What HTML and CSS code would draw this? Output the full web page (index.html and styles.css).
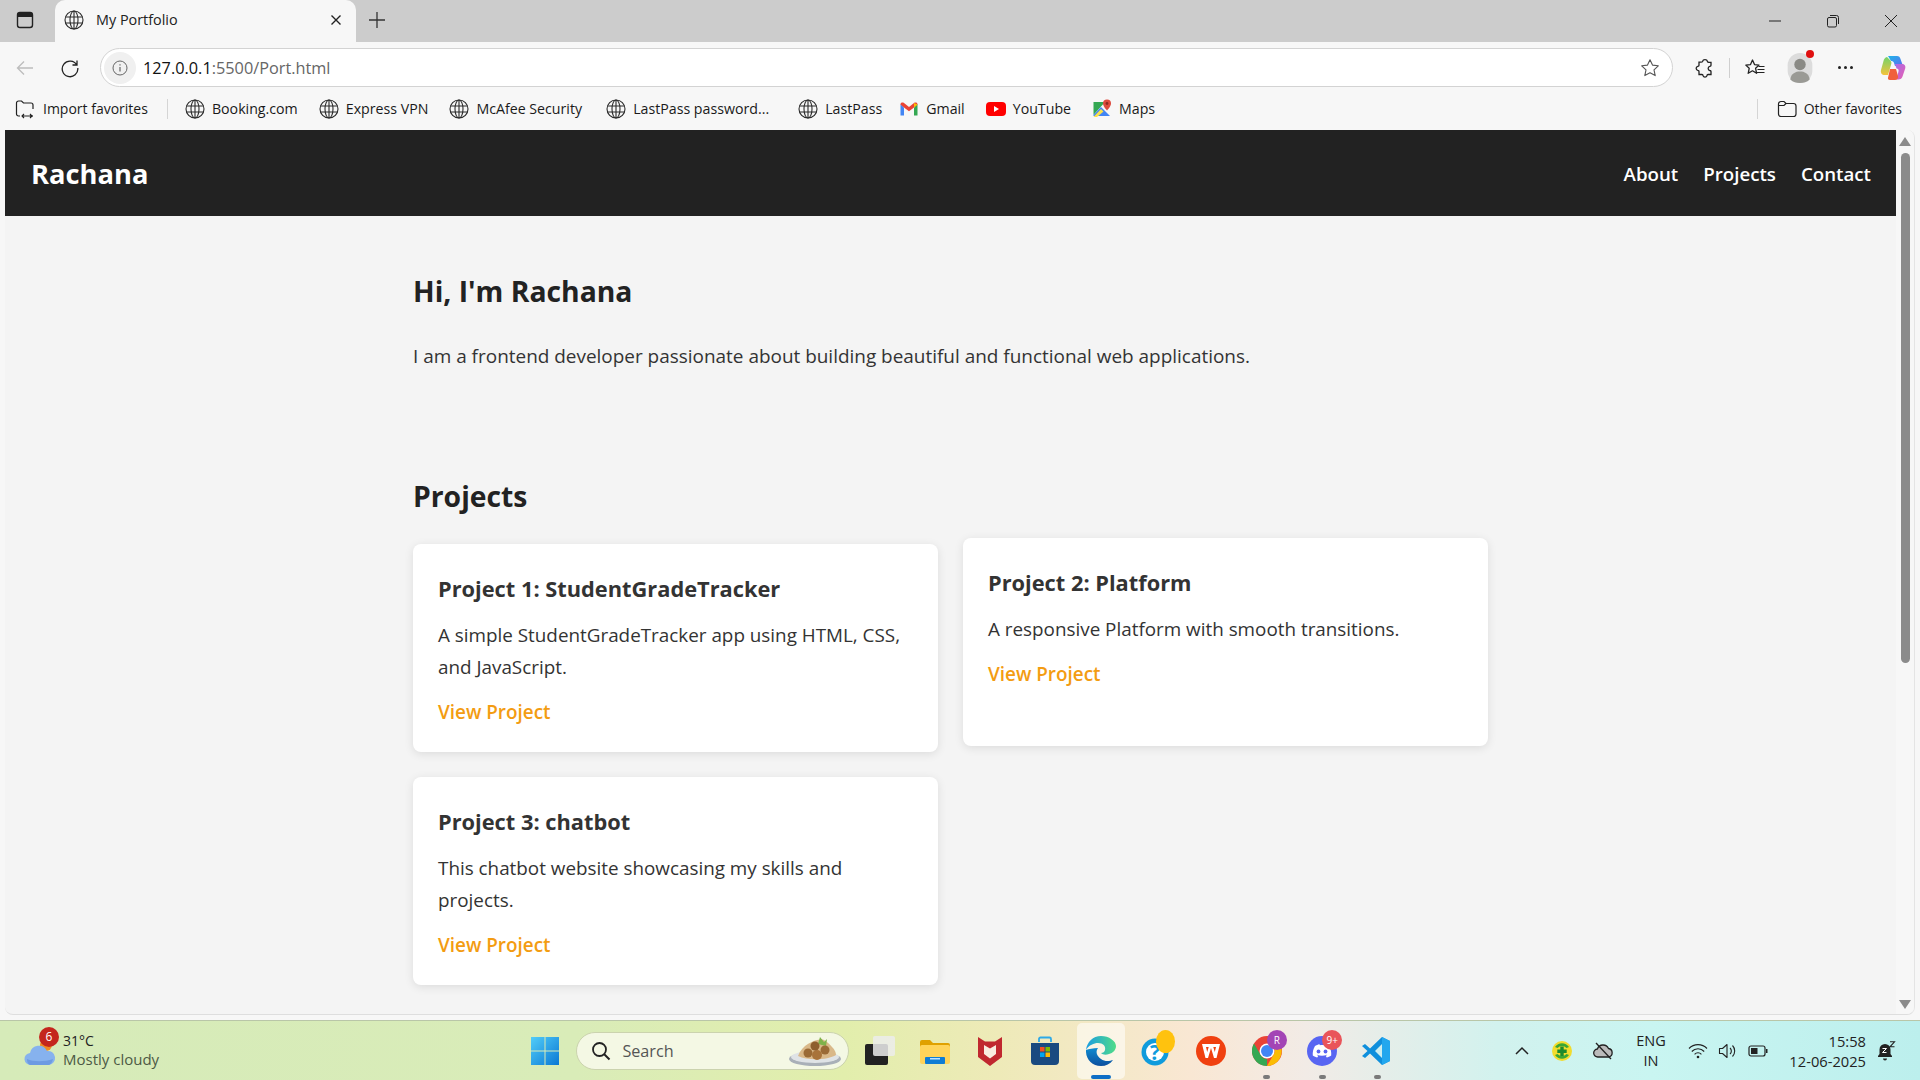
FILE: index.html
```html
<!DOCTYPE html>
<html lang="en">
  <head>
    <meta charset="utf-8" />
    <meta name="viewport" content="width=device-width, initial-scale=1" />
    <title>My Portfolio</title>
    <link rel="stylesheet" href="styles.css">
  </head>
  <body>
    <svg class="defs" width="0" height="0">
      <symbol id="globe" viewBox="0 0 20 20">
        <g fill="none" stroke="#2b2b2b" stroke-width="1.1">
          <circle cx="10" cy="10" r="9" />
          <ellipse cx="10" cy="10" rx="4" ry="9" />
          <path d="M1.6 7h16.8M1.6 13h16.8M10 1v18" />
        </g>
      </symbol>
    </svg>

    <div class="window">
      <!-- tab strip -->
      <div class="tabstrip">
        <div class="tabstrip-side">
          <svg class="ic20" viewBox="0 0 20 20"><rect x="2.5" y="2.5" width="15" height="15" rx="2.5" fill="none" stroke="#222" stroke-width="1.4" /><path d="M2.5 7V5a2.500 2.500 0 0 1 2.500-2.500h10A2.500 2.500 0 0 1 17.500 5v2z" fill="#222" /></svg>
        </div>
        <div class="tab">
          <svg class="ic20"><use href="#globe" /></svg>
          <span class="tab-title">My Portfolio</span>
          <svg class="tab-close" viewBox="0 0 12 12"><path d="M1.500 1.500l9 9M10.500 1.500l-9 9" stroke="#222" stroke-width="1.400" /></svg>
        </div>
        <svg class="tab-new" viewBox="0 0 18 18"><path d="M9 1v16M1 9h16" stroke="#333" stroke-width="1.300" /></svg>
        <div class="winctl">
          <svg class="winbtn" viewBox="0 0 14 14"><path d="M1 7h12" stroke="#222" stroke-width="1" /></svg>
          <svg class="winbtn" viewBox="0 0 14 14"><rect x="1.500" y="3.500" width="9" height="9.500" rx="1.500" fill="none" stroke="#222" /><path d="M4 1.500h6.500A2 2 0 0 1 12.500 3.500V10" fill="none" stroke="#222" /></svg>
          <svg class="winbtn" viewBox="0 0 14 14"><path d="M1 1l12 12M13 1L1 13" stroke="#222" stroke-width="1" /></svg>
        </div>
      </div>

      <!-- address bar -->
      <div class="toolbar">
        <svg class="tool-back" viewBox="0 0 20 20"><path d="M18 10H2.500M9 3.500L2.500 10 9 16.500" fill="none" stroke="#bdbdbd" stroke-width="1.300" /></svg>
        <svg class="tool-reload" viewBox="0 0 20 20"><path d="M16.800 7A7.800 7.800 0 1 0 17.800 10M17 2.500V7h-4.500" fill="none" stroke="#222" stroke-width="1.300" /></svg>
        <div class="address">
          <span class="addr-info"><svg class="ic16" viewBox="0 0 16 16"><circle cx="8" cy="8" r="7" fill="none" stroke="#666" /><path d="M8 7v4.500M8 4.300v1.200" stroke="#666" stroke-width="1.200" /></svg></span>
          <span class="addr-host">127.0.0.1</span><span class="addr-path">:5500/Port.html</span>
          <svg class="addr-star" viewBox="0 0 20 20"><path d="M10 1.700l2.500 5.400 5.800.7-4.300 4 1.200 5.800-5.200-2.900-5.200 2.900 1.200-5.800-4.300-4 5.800-.7z" fill="none" stroke="#555" stroke-width="1.100" stroke-linejoin="round" /></svg>
        </div>
        <div class="tools">
          <svg class="tool t-ext" viewBox="0 0 20 20"><path d="M7.500 3.500a2.600 2.600 0 0 1 5 0c.2.700.8.900 1.500.8h2v3c0 .700-.6 1-1.200 1.100a2.100 2.100 0 0 0 0 4.100c.6.100 1.200.4 1.200 1.100V16.500h-3c-.7 0-1 .6-1.100 1.200a2 2 0 0 1-3.800 0c-.1-.6-.4-1.200-1.100-1.200h-3v-3c0-.7-.6-1-1.200-1.100a2.100 2.100 0 0 1 0-4.100c.6-.1 1.200-.4 1.200-1.100v-3h2c.7 0 1.300-.1 1.500-.7z" fill="none" stroke="#222" stroke-width="1.300" /></svg>
          <span class="tool-sep"></span>
          <svg class="tool t-fav" viewBox="0 0 22 20"><path d="M8.500 2l2 4.600 4.500.5-3.400 3.200 1 5-4.100-2.500-4.300 2.500 1-5L1.800 7.100l4.700-.5z" fill="none" stroke="#222" stroke-width="1.300" stroke-linejoin="round" /><path d="M14.500 8.500h6M13.500 11.500h7M13 14.500h7.500" stroke="#222" stroke-width="1.100" /></svg>
          <span class="avatar">
            <svg viewBox="0 0 28 34" class="avatar-img"><rect width="28" height="34" rx="14" fill="#dcdcdc" /><circle cx="14" cy="13" r="6.500" fill="#8a8a85" /><path d="M3 30c1-7 6-9 11-9s10 2 11 9c-3 3-7 4-11 4S6 33 3 30z" fill="#9a9a95" /></svg>
            <span class="avatar-dot"></span>
          </span>
          <span class="tool-more">
            <i></i><i></i><i></i>
          </span>
          <svg class="t-copilot" viewBox="0 0 28 28">
            <defs>
              <linearGradient id="cpA" x1="0" y1="0" x2="1" y2="1"><stop offset="0" stop-color="#1fb6e8" /><stop offset="1" stop-color="#5e6cf0" /></linearGradient>
              <linearGradient id="cpB" x1="0" y1="0" x2="0" y2="1"><stop offset="0" stop-color="#72d36a" /><stop offset="1" stop-color="#f5c33b" /></linearGradient>
              <linearGradient id="cpC" x1="0" y1="0" x2="1" y2="1"><stop offset="0" stop-color="#a66ce8" /><stop offset="1" stop-color="#ea5fb0" /></linearGradient>
            </defs>
            <path d="M9 2h9c2 0 3 1 3.500 3L24 12h-8l-1-3c-.5-1.500-1.500-2-3-2z" fill="url(#cpA)" />
            <path d="M8 3c-2 .5-3 2-3.500 4L2 16c-.7 3 1 5 3.500 5H9l3-10c.5-1.500 1-3-1-5z" fill="url(#cpB)" />
            <path d="M16 10h7c2.500 0 4 2 3.200 4.500l-2.700 8c-.6 2-2 3-4 3h-2l2-8c.5-2-.5-3-2-3z" fill="url(#cpC)" />
            <path d="M11 15h6l2 7c.5 2-.7 4-3 4h-5c-2 0-2.500-1.500-1.800-3z" fill="#f0603c" />
          </svg>
        </div>
      </div>

      <!-- favorites bar -->
      <div class="favbar">
        <a class="fav fav-import">
          <svg class="ic20" viewBox="0 0 20 20"><path d="M5 17H3.500A2 2 0 0 1 1.500 15V4A2 2 0 0 1 3.500 2h3l2 2h7.500a2 2 0 0 1 2 2v4M15 17h3" fill="none" stroke="#222" stroke-width="1.200" /><path d="M7 17h10M9 15l-2 2 2 2M15 15l2 2-2 2" fill="none" stroke="#222" stroke-width="1.100" /></svg>
          Import favorites
        </a>
        <span class="fav-sep"></span>
        <a class="fav"><svg class="ic20"><use href="#globe" /></svg>Booking.com</a>
        <a class="fav"><svg class="ic20"><use href="#globe" /></svg>Express VPN</a>
        <a class="fav fav-wide"><svg class="ic20"><use href="#globe" /></svg>McAfee Security</a>
        <a class="fav fav-long"><svg class="ic20"><use href="#globe" /></svg>LastPass password...</a>
        <a class="fav fav-short"><svg class="ic20"><use href="#globe" /></svg>LastPass</a>
        <a class="fav">
          <svg class="ic20" viewBox="0 0 20 20"><path d="M1.500 5v11.500h3.500V8.500z" fill="#4285f4" /><path d="M18.500 5v11.500H15V8.500z" fill="#34a853" /><path d="M1.500 5.500C1.500 3.500 3.500 3 5 4l5 4 5-4c1.500-1 3.500-.5 3.500 1.500L15 8.500l-5 3.800-5-3.800z" fill="#ea4335" /><path d="M15 4l3.500 1.500L15 8.500z" fill="#fbbc04" /></svg>
          Gmail
        </a>
        <a class="fav">
          <svg class="ic20" viewBox="0 0 20 20"><rect y="3" width="20" height="14" rx="4" fill="#f00" /><path d="M8 7l5 3-5 3z" fill="#fff" /></svg>
          YouTube
        </a>
        <a class="fav">
          <svg class="ic20" viewBox="0 0 20 20"><path d="M1.500 3h11.500L1.500 16z" fill="#34a853" /><path d="M1.500 16L9 8l9 9H1.500z" fill="#4285f4" /><path d="M1.500 18l7.500-8 2.500 2.500L5 18z" fill="#fbe14b" /><path d="M15 0.500a4 4 0 0 1 4 4c0 3-4 7-4 7s-4-4-4-7a4 4 0 0 1 4-4z" fill="#dd4b3e" /><circle cx="15" cy="4.500" r="1.400" fill="#8f2a20" /></svg>
          Maps
        </a>
        <span class="fav-sep fav-sep-end"></span>
        <a class="fav fav-other">
          <svg class="ic20" viewBox="0 0 20 20"><path d="M1.500 5A2.500 2.500 0 0 1 4 2.500h3l2 2h7.500A2.500 2.500 0 0 1 19 7v8a2.500 2.500 0 0 1-2.500 2.500h-12.500A2.500 2.500 0 0 1 1.500 15zM1.500 6.500H7l2-2" fill="none" stroke="#222" stroke-width="1.200" /></svg>
          Other favorites
        </a>
      </div>

      <!-- the portfolio page itself -->
      <div class="viewport">
        <div class="page">
          <header class="site-header">
            <div class="logo">Rachana</div>
            <nav class="site-nav">
              <a href="#about">About</a>
              <a href="#projects">Projects</a>
              <a href="#contact">Contact</a>
            </nav>
          </header>
          <main class="content">
            <section class="intro" id="about">
              <h2>Hi, I'm Rachana</h2>
              <p>I am a frontend developer passionate about building beautiful and functional web applications.</p>
            </section>
            <section id="projects">
              <h2>Projects</h2>
              <div class="project-grid">
                <div class="card">
                  <h3>Project 1: StudentGradeTracker</h3>
                  <p>A simple StudentGradeTracker app using HTML, CSS, and JavaScript.</p>
                  <a href="#">View Project</a>
                </div>
                <div class="card card-hover">
                  <h3>Project 2: Platform</h3>
                  <p>A responsive Platform with smooth transitions.</p>
                  <a href="#">View Project</a>
                </div>
                <div class="card">
                  <h3>Project 3: chatbot</h3>
                  <p>This chatbot website showcasing my skills and projects.</p>
                  <a href="#">View Project</a>
                </div>
              </div>
            </section>
          </main>
        </div>
        <div class="scrollbar">
          <span class="arrow-up"></span>
          <span class="thumb"></span>
          <span class="arrow-down"></span>
        </div>
      </div>

      <!-- windows taskbar -->
      <footer class="taskbar">
        <div class="weather">
          <span class="weather-icon">
            <svg viewBox="0 0 32 30"><circle cx="22" cy="8" r="6" fill="#f08a24" /><path d="M7 28a6 6 0 0 1-1-12 9 9 0 0 1 17-2 7 7 0 0 1 2 14z" fill="#86b2ee" /><path d="M3 22c6 3 18 3 26 0-1 4-3 6-5 6H7c-2 0-4-2-4-6z" fill="#6d9be2" /></svg>
            <span class="weather-badge">6</span>
          </span>
          <div class="weather-text">
            <div class="weather-temp">31°C</div>
            <div class="weather-desc">Mostly cloudy</div>
          </div>
        </div>

        <div class="task-item">
          <svg class="ic30" viewBox="0 0 30 30"><defs><linearGradient id="winG" x1="0" y1="0" x2="1" y2="1"><stop offset="0" stop-color="#52cdf8" /><stop offset="1" stop-color="#0a78d4" /></linearGradient></defs><path d="M1 1h13.500v13.500H1zM15.500 1H29v13.500H15.500zM1 15.500h13.500V29H1zM15.500 15.500H29V29H15.500z" fill="url(#winG)" /></svg>
        </div>

        <div class="search">
          <svg class="search-icon" viewBox="0 0 20 20"><circle cx="8.500" cy="8.500" r="6.500" fill="none" stroke="#222" stroke-width="1.800" /><path d="M13 13l5.500 5.500" stroke="#222" stroke-width="2" /></svg>
          <span class="search-label">Search</span>
          <svg class="search-pic" viewBox="0 0 54 30">
            <ellipse cx="27" cy="23" rx="26" ry="7" fill="#a9b0b8" /><ellipse cx="27" cy="21" rx="24" ry="6" fill="#dfe3e6" />
            <path d="M10 20C14 8 30 2 36 4c6 4 12 10 12 15-8 5-28 6-38 1z" fill="#d9b888" />
            <path d="M32 1l4 5 3-3-1 7-8-2z" fill="#7fb24a" />
            <circle cx="20" cy="17" r="4.500" fill="#9a6a35" /><circle cx="29" cy="19" r="5" fill="#a8733a" /><circle cx="27" cy="10" r="4.500" fill="#8e5f2e" /><circle cx="37" cy="14" r="4.500" fill="#9a6a35" />
          </svg>
        </div>

        <div class="task-icons">
          <div class="task-item">
            <svg class="ic30 icon-right" viewBox="0 0 30 30"><rect x="0" y="8" width="23" height="21" rx="2" fill="#222" /><rect x="8" y="0" width="22" height="20" rx="2" fill="#ececec" opacity=".85" /></svg>
          </div>
          <div class="task-item">
            <svg class="ic30 icon-right" viewBox="0 0 30 30"><path d="M0 6a2 2 0 0 1 2-2h8l3 3h15a2 2 0 0 1 2 2v2H0z" fill="#e0a100" /><rect y="9" width="30" height="19" rx="2" fill="#ffd45a" /><rect x="5" y="21" width="20" height="7" rx="1" fill="#0f7dd4" /><rect x="10" y="22" width="10" height="1.500" fill="#bfe3ff" /></svg>
          </div>
          <div class="task-item">
            <svg class="ic30" viewBox="0 0 30 30"><path d="M3 1l7 4.500h10L27 1v20L15 30 3 21z" fill="#c0282f" /><path d="M9 9l6 3.500L21 9v9l-6 4.500L9 18z" fill="#f8ece0" /></svg>
          </div>
          <div class="task-item">
            <svg class="ic30" viewBox="0 0 30 30"><path d="M9 6V3a1.500 1.500 0 0 1 1.500-1.500h9A1.500 1.500 0 0 1 21 3v3" fill="none" stroke="#2da9e8" stroke-width="1.800" /><path d="M1 7h28v18a4 4 0 0 1-4 4H5a4 4 0 0 1-4-4z" fill="#1a4a80" /><rect x="10" y="11" width="4.500" height="4.500" fill="#f25022" /><rect x="15.500" y="11" width="4.500" height="4.500" fill="#7fba00" /><rect x="10" y="16.500" width="4.500" height="4.500" fill="#00a4ef" /><rect x="15.500" y="16.500" width="4.500" height="4.500" fill="#ffb900" /></svg>
          </div>
          <div class="task-item task-active">
            <svg class="ic30" viewBox="0 0 30 30">
              <defs>
                <linearGradient id="edgeA" x1="0" y1="0" x2="1" y2="0"><stop offset="0" stop-color="#1b9de2" /><stop offset="1" stop-color="#4fdc88" /></linearGradient>
                <linearGradient id="edgeB" x1="0" y1="0" x2="0" y2="1"><stop offset="0" stop-color="#0e8bd0" /><stop offset="1" stop-color="#0c4f9e" /></linearGradient>
              </defs>
              <path d="M15 0C7 0 1 6 0 14c3-5 8-7 12-7 5 0 8 3 7 7-.4 2-2 3-4 3 2 2 5 2 8 1 4-1 7-4 7-8C30 5 23 0 15 0z" fill="url(#edgeA)" />
              <path d="M0 14c-.5 9 6 16 15 16 5 0 9-2 12-6-3 1-8 2-12-1-4-2.500-6-7-3-11-5 0-9 1-12 2z" fill="url(#edgeB)" />
            </svg>
            <span class="task-pill"></span>
          </div>
          <div class="task-item">
            <span class="task-wrap">
              <svg class="ic30" viewBox="0 0 30 30"><circle cx="14" cy="16" r="13.500" fill="#0f9bdc" /><circle cx="14" cy="16" r="9" fill="#fff" /></svg>
              <span class="help-mark">?</span>
              <span class="help-bubble"></span>
            </span>
          </div>
          <div class="task-item">
            <svg class="ic30" viewBox="0 0 30 30"><circle cx="15" cy="15" r="15" fill="#f0400f" /><path d="M6 8h18l-3.500 14h-2.500L15 12l-3 10H9.500zM10 11l1.200 5 1.500-5zM17.300 11l1.500 5 1.200-5z" fill="#fff" fill-rule="evenodd" /></svg>
          </div>
          <div class="task-item task-open">
            <span class="task-wrap">
              <svg class="ic30" viewBox="0 0 30 30"><circle cx="15" cy="15" r="15" fill="#ea4335" /><path d="M15 30A15 15 0 0 1 2 7.500L9 19.500a7 7 0 0 0 6 3.500z" fill="#34a853" /><path d="M15 8h13a15 15 0 0 1-13 22l6-10.500A7 7 0 0 0 15 8z" fill="#fbbc04" /><circle cx="15" cy="15" r="7.500" fill="#fff" /><circle cx="15" cy="15" r="6" fill="#4285f4" /></svg>
              <span class="task-badge badge-purple">R</span>
            </span>
            <span class="task-dot"></span>
          </div>
          <div class="task-item task-open">
            <span class="task-wrap">
              <svg class="ic30" viewBox="0 0 30 30"><circle cx="15" cy="15" r="15" fill="#5865f2" /><path d="M8 10c2-1.200 4-1.700 4.500-1.700l.4.900c1.400-.2 2.800-.2 4.200 0l.4-.9c1 .1 3 .7 4.500 1.700 2 3.200 2.500 6.500 2.200 9.500-1.500 1.200-3.200 1.800-4.500 2l-1-1.700 1.500-.8-.4-.3c-3 1.300-6.600 1.300-9.600 0l-.4.300 1.500.8-1 1.700c-1.300-.2-3-.8-4.500-2-.3-3 .2-6.300 2.200-9.500z" fill="#fff" /><circle cx="11.500" cy="15.500" r="1.900" fill="#5865f2" /><circle cx="18.500" cy="15.500" r="1.900" fill="#5865f2" /></svg>
              <span class="task-badge badge-red">9+</span>
            </span>
            <span class="task-dot"></span>
          </div>
          <div class="task-item task-open">
            <svg class="ic30 icon-left" viewBox="0 0 30 30"><path d="M21 1l8 4v20l-8 4L9 17.500l-5 4.500-3-2 5.500-5L1 10l3-2 5 4.500z" fill="#0f8fdc" /><path d="M21 1l8 4v20l-8 4z" fill="#22a7ee" /><path d="M21 8l-7 7 7 7z" fill="#cdeef0" /></svg>
            <span class="task-dot"></span>
          </div>
        </div>

        <div class="tray">
          <div class="tray-item tray-wide">
            <svg class="ic16" viewBox="0 0 16 16"><path d="M2 11l6-6 6 6" fill="none" stroke="#222" stroke-width="1.500" /></svg>
          </div>
          <div class="tray-item tray-wide">
            <svg class="ic20" viewBox="0 0 20 20"><circle cx="10" cy="10" r="10" fill="#f2dc2d" /><path d="M3 6a8.500 8.500 0 0 1 14 0l-2.500 1a6 6 0 0 0-9 0zM17 14a8.500 8.500 0 0 1-14 0l2.500-1a6 6 0 0 0 9 0z" fill="#3aa635" /><path d="M8.300 5.500h3.400v3h3v3.400h-3v3H8.300v-3h-3V8.500h3z" fill="#1d8a2c" /></svg>
          </div>
          <div class="tray-item tray-wide">
            <svg class="ic20" viewBox="0 0 20 20"><path d="M5 16a4 4 0 0 1-.6-8A6 6 0 0 1 15.500 7.500 4.300 4.300 0 0 1 15.500 16z" fill="#bbb" stroke="#222" stroke-width="1.300" /><path d="M3 2l15 16" stroke="#222" stroke-width="1.300" /></svg>
          </div>
          <div class="tray-lang">ENG<br />IN</div>
          <div class="tray-item">
            <svg class="ic20" viewBox="0 0 20 20"><path d="M1 7.500a12.500 12.500 0 0 1 18 0M3.800 10.500a8.500 8.500 0 0 1 12.400 0M6.600 13.300a4.500 4.500 0 0 1 6.800 0" fill="none" stroke="#222" stroke-width="1.100" /><circle cx="10" cy="16" r="1.300" fill="#222" /></svg>
          </div>
          <div class="tray-item">
            <svg class="ic20" viewBox="0 0 20 20"><path d="M1.500 7.500h3L9 3.500v13l-4.500-4h-3z" fill="none" stroke="#222" stroke-width="1.100" stroke-linejoin="round" /><path d="M12 7a4 4 0 0 1 0 6M14.500 4.500a8 8 0 0 1 0 11" fill="none" stroke="#222" stroke-width="1.100" /></svg>
          </div>
          <div class="tray-item">
            <svg class="ic20" viewBox="0 0 20 20"><rect x="1" y="5" width="16" height="10" rx="2" fill="none" stroke="#222" stroke-width="1.200" /><rect x="3" y="7" width="6.500" height="6" fill="#222" /><rect x="18" y="8" width="1.500" height="4" fill="#222" /></svg>
          </div>
          <div class="clock">15:58<br />12-06-2025</div>
          <div class="tray-bell">
            <svg class="ic20" viewBox="0 0 20 20"><path d="M9 3a5.500 5.500 0 0 0-5.500 5.500V13L2 15v1h14v-1l-1.500-2V8.500A5.500 5.500 0 0 0 9 3z" fill="#222" /><path d="M7 17.500a2 2 0 0 0 4 0z" fill="#222" /><path d="M6.500 7.500h4l-4 4h4" fill="none" stroke="#fff" stroke-width="1" /><path d="M14 .8h4.500l-4.500 5h4.500" fill="none" stroke="#222" stroke-width="1.100" /></svg>
          </div>
        </div>
      </footer>
    </div>
  </body>
</html>
```

FILE: styles.css
```css
* {
  box-sizing: border-box;
}

html,
body {
  margin: 0;
  height: 100%;
  overflow: hidden;
}

body {
  font-family: "Open Sans", "Noto Sans", sans-serif;
  color: #222;
}

a {
  text-decoration: none;
}

.defs {
  position: absolute;
}

.window {
  display: flex;
  flex-direction: column;
  height: 1080px;
  background: #f7f7f7;
}

.ic16 {
  width: 16px;
  height: 16px;
  flex: none;
}

.ic20 {
  width: 20px;
  height: 20px;
  flex: none;
}

.ic30 {
  width: 30px;
  height: 30px;
  flex: none;
}

.icon-right {
  margin-left: 2px;
}

.icon-left {
  margin-right: 4px;
}

/* tab strip */
.tabstrip {
  display: flex;
  align-items: center;
  height: 42px;
  background: #cccccc;
  flex: none;
}

.tabstrip-side {
  width: 55px;
  padding-left: 15px;
  margin-bottom: 2px;
  display: flex;
}

.tab {
  width: 301px;
  height: 42px;
  align-self: flex-end;
  background: #f7f7f7;
  border-radius: 10px 10px 0 0;
  display: flex;
  align-items: center;
  padding: 0 14px 2px 9px;
}

.tab-title {
  margin: -1px 0 0 12px;
  font-size: 14.400px;
  flex: 1;
}

.tab-close {
  width: 12px;
  height: 12px;
}

.tab-new {
  width: 18px;
  height: 18px;
  margin: 0 0 2px 12px;
}

.winctl {
  margin-left: auto;
  display: flex;
  gap: 44px;
  padding-right: 22px;
}

.winbtn {
  width: 14px;
  height: 14px;
}

/* toolbar */
.toolbar {
  display: flex;
  align-items: center;
  height: 45px;
  padding: 6px 0 0 15px;
  flex: none;
}

.tool-back,
.tool-reload {
  width: 20px;
  height: 20px;
  flex: none;
}

.tool-reload {
  margin-left: 25px;
}

.address {
  margin-left: 20px;
  width: 1573px;
  height: 39px;
  background: #fff;
  border: 1px solid #d3d3d3;
  border-radius: 20px;
  display: flex;
  align-items: center;
  padding: 0 12px 0 3px;
  font-size: 16.300px;
}

.addr-info {
  width: 32px;
  height: 32px;
  background: #f0f0f0;
  border-radius: 50%;
  display: flex;
  align-items: center;
  justify-content: center;
  margin-right: 7px;
}

.addr-host {
  color: #111;
}

.addr-path {
  color: #666;
}

.addr-star {
  width: 20px;
  height: 20px;
  margin-left: auto;
}

.tools {
  display: flex;
  align-items: center;
  flex: 1;
  padding-left: 22px;
}

.tool {
  flex: none;
}

.t-ext {
  width: 20px;
  height: 20px;
}

.tool-sep {
  width: 1px;
  height: 20px;
  background: #cfcfcf;
  margin: 0 14px 0 14px;
}

.t-fav {
  width: 22px;
  height: 20px;
}

.avatar {
  position: relative;
  width: 28px;
  height: 34px;
  margin-left: 20px;
  display: block;
}

.avatar-img {
  display: block;
  width: 28px;
  height: 30px;
  margin-top: 2px;
}

.avatar-dot {
  position: absolute;
  right: 0;
  top: -1px;
  width: 8px;
  height: 8px;
  border-radius: 50%;
  background: #e01010;
}

.tool-more {
  display: flex;
  gap: 3px;
  margin-left: 24px;
}

.tool-more i {
  width: 3px;
  height: 3px;
  border-radius: 50%;
  background: #222;
}

.t-copilot {
  width: 28px;
  height: 30px;
  margin-left: 26px;
  flex: none;
}

/* favorites */
.favbar {
  display: flex;
  align-items: center;
  height: 43px;
  padding-left: 15px;
  font-size: 14.200px;
  flex: none;
}

.fav {
  display: flex;
  align-items: center;
  gap: 7px;
  margin-right: 21px;
  color: #1a1a1a;
  white-space: nowrap;
}

.fav-import {
  gap: 8px;
  margin-right: 19px;
  font-size: 14px;
}

.fav-wide {
  margin-right: 24px;
}

.fav-long {
  margin-right: 29px;
}

.fav-short {
  margin-right: 17px;
}

.fav-sep {
  width: 1px;
  height: 20px;
  background: #d5d5d5;
  margin-right: 17px;
}

.fav-sep-end {
  margin-left: auto;
  margin-right: 19px;
}

.fav-other {
  margin-right: 18px;
  font-size: 14px;
}

/* page area */
.viewport {
  height: 885px;
  margin: 0 5px 0 5px;
  display: flex;
  border-radius: 0 8px 8px 8px;
  border-bottom: 1px solid #dedede;
  border-right: 1px solid #e4e4e4;
  background: #f4f4f4;
  overflow: hidden;
  flex: none;
}

.page {
  flex: 1;
  overflow: hidden;
  line-height: 32px;
  color: #333;
}

.site-header {
  height: 86px;
  background: #222222;
  display: flex;
  align-items: center;
  justify-content: space-between;
  padding: 2px 25px 0 26px;
  color: #fff;
}

.logo {
  font-size: 27.300px;
  font-weight: 700;
}

.site-nav {
  display: flex;
  gap: 25px;
}

.site-nav a {
  color: #fff;
  font-size: 18.700px;
  font-weight: 600;
}

.content {
  width: 1075px;
  margin: 0 auto;
}

.intro {
  padding-top: 50px;
  margin-bottom: 99px;
}

.content h2 {
  margin: 0 0 23px;
  font-size: 28.300px;
  line-height: 50px;
  font-weight: 700;
  color: #222;
}

.content .intro h2 {
  margin-bottom: 24px;
}

.intro p {
  margin: 0;
  font-size: 18.950px;
}

.project-grid {
  display: grid;
  grid-template-columns: 1fr 1fr;
  gap: 25px;
}

.card {
  background: #fff;
  border-radius: 8px;
  padding: 25px;
  height: 208px;
  box-shadow: 0 2px 10px rgba(0, 0, 0, 0.1);
}

/* the pointer was resting on this one in the screenshot */
.card-hover {
  transform: translateY(-6px);
}

.card h3 {
  margin: 0 0 11px;
  padding-top: 1px;
  font-size: 21.800px;
  line-height: 38px;
  font-weight: 700;
  color: #333;
}

.card p {
  margin: 0 0 12px;
  font-size: 18.850px;
}

.card a {
  color: #f39c12;
  font-size: 18.900px;
  font-weight: 600;
  display: block;
  padding-top: 1px;
}

/* scrollbar */
.scrollbar {
  width: 18px;
  position: relative;
  background: #f7f7f7;
  flex: none;
}

.thumb {
  position: absolute;
  top: 23px;
  left: 5px;
  width: 9px;
  height: 510px;
  border-radius: 5px;
  background: #8b8b8b;
}

.arrow-up,
.arrow-down {
  position: absolute;
  left: 3px;
  width: 0;
  height: 0;
  border-left: 6px solid transparent;
  border-right: 6px solid transparent;
}

.arrow-up {
  top: 7px;
  border-bottom: 9px solid #8b8b8b;
}

.arrow-down {
  bottom: 5px;
  border-top: 9px solid #8b8b8b;
}

/* taskbar */
.taskbar {
  margin-top: 5px;
  height: 60px;
  flex: none;
  display: flex;
  align-items: center;
  padding-left: 23px;
  border-top: 1px solid #b9c6a8;
  background: linear-gradient(90deg, #d6ebb9 0%, #d9ecb8 30%, #e2eeac 44%, #eeeab8 52%, #f9e7d3 62%, #f2ebe6 68%, #d2f2ee 78%, #c9f5f1 86%, #bcefed 100%);
}

.weather {
  width: 494px;
  display: flex;
  align-items: center;
}

.weather-icon {
  position: relative;
  width: 32px;
  height: 30px;
  margin: 3px 0 0 1px;
}

.weather-icon svg {
  display: block;
  width: 32px;
  height: 30px;
}

.weather-badge {
  position: absolute;
  top: -10px;
  left: 15px;
  width: 20px;
  height: 20px;
  border-radius: 50%;
  background: #c4261d;
  color: #fff;
  font-size: 12px;
  line-height: 20px;
  text-align: center;
}

.weather-text {
  margin-left: 7px;
  font-size: 14px;
  line-height: 19px;
  margin-top: -2px;
}

.weather-desc {
  color: #4d5a45;
  font-size: 15px;
}

.task-item {
  position: relative;
  width: 55.400px;
  height: 56px;
  display: flex;
  align-items: center;
  justify-content: center;
  flex: none;
}

.task-wrap {
  position: relative;
  display: block;
  height: 30px;
}

.search {
  width: 273px;
  height: 38px;
  margin-left: 4px;
  margin-right: 2px;
  border-radius: 19px;
  background: #f4f8e4;
  border: 1px solid #cbd3ae;
  display: flex;
  align-items: center;
  padding-left: 14px;
}

.search-icon {
  width: 20px;
  height: 20px;
}

.search-label {
  margin-left: 11px;
  font-size: 16.200px;
  color: #555;
}

.search-pic {
  width: 54px;
  height: 30px;
  margin-left: auto;
  margin-right: 6px;
}

.task-icons {
  display: flex;
}

.task-active {
  background: rgba(255, 255, 255, 0.55);
  border-radius: 5px;
  width: 48px;
  margin: 0 3.700px;
}

.task-pill {
  position: absolute;
  bottom: 0;
  left: 14px;
  width: 20px;
  height: 4px;
  border-radius: 2px;
  background: #0f6fc6;
}

.task-dot {
  position: absolute;
  bottom: 0;
  left: 24px;
  width: 7px;
  height: 4px;
  border-radius: 2px;
  background: #7a7a7a;
}

.task-badge {
  position: absolute;
  top: -6px;
  left: 15px;
  width: 20px;
  height: 20px;
  border-radius: 50%;
  color: #fff;
  font-size: 10px;
  line-height: 20px;
  text-align: center;
}

.badge-purple {
  background: #a345b5;
}

.badge-red {
  background: #e9545a;
}

.help-mark {
  position: absolute;
  left: 6px;
  top: 3px;
  width: 16px;
  text-align: center;
  font-size: 21px;
  line-height: 26px;
  font-weight: 700;
  color: #0f9bdc;
}

.help-bubble {
  position: absolute;
  left: 15px;
  top: -6px;
  width: 19px;
  height: 23px;
  border-radius: 50%;
  background: #ffc20e;
}

.tray {
  margin-left: auto;
  display: flex;
  align-items: center;
  padding-right: 19px;
}

.tray-item {
  width: 30px;
  display: flex;
  justify-content: center;
}

.tray-wide {
  width: 40.500px;
}

.tray-lang {
  width: 56px;
  margin-right: 4px;
  text-align: center;
  font-size: 14.500px;
  line-height: 20px;
}

.clock {
  width: 93px;
  text-align: right;
  font-size: 14.700px;
  line-height: 20px;
  white-space: nowrap;
}

.tray-bell {
  width: 35px;
  display: flex;
  justify-content: center;
  padding-left: 4px;
}
```
